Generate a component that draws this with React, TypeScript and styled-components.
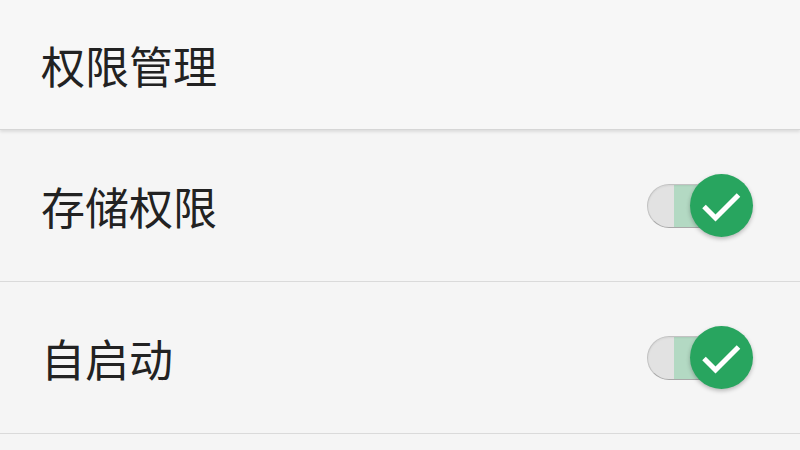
import React from "react";
import styled, { createGlobalStyle } from "styled-components";

const Global = createGlobalStyle`
  html, body { margin: 0; padding: 0; background: #f5f5f5; }
  body { font-family: "Noto Sans CJK SC", "Noto Sans", sans-serif; color: #222; }
`;

const Page = styled.div`
  width: 800px;
  height: 450px;
  overflow: hidden;
  background: #f5f5f5;
  display: flex;
  flex-direction: column;
`;

const Header = styled.header`
  height: 129px;
  flex: none;
  display: flex;
  align-items: center;
  padding-left: 41px;
  background: #f7f7f7;
  border-bottom: 1px solid #d6d6d6;
  box-shadow: 0 2px 3px rgba(0, 0, 0, 0.1);
  position: relative;
  z-index: 1;
`;

const Title = styled.h1`
  margin: 0;
  font-size: 44px;
  font-weight: 400;
  line-height: 1;
  color: #222;
`;

const Row = styled.div`
  height: 152px;
  flex: none;
  display: flex;
  align-items: center;
  justify-content: space-between;
  padding: 0 47px 0 41px;
  border-bottom: 1px solid #dadada;
  box-sizing: border-box;
`;

const Label = styled.span`
  font-size: 44px;
  font-weight: 400;
  line-height: 1;
  color: #222;
`;

const Toggle = styled.div`
  position: relative;
  width: 106px;
  height: 63px;
  flex: none;
`;

const Track = styled.div`
  position: absolute;
  left: 0;
  top: 10px;
  width: 90px;
  height: 44px;
  border-radius: 22px;
  box-sizing: border-box;
  background: linear-gradient(to right, #e2e2e2 0 26px, #b3d9c3 26px 100%);
  border: 1.5px solid #c2c2c2;
  border-bottom-color: #a8a8a8;
  box-shadow: inset 0 1px 2px rgba(0, 0, 0, 0.06);
`;

const Knob = styled.div`
  position: absolute;
  right: 0;
  top: 0;
  width: 63px;
  height: 63px;
  border-radius: 50%;
  background: #28a55f;
  box-shadow: 0 2px 4px rgba(0, 0, 0, 0.25);
`;

const CheckSvg = styled.svg`
  display: block;
`;

const Check = () => (
  <CheckSvg width="63" height="63" viewBox="0 0 63 63">
    <path d="M14 32.5 L25.5 44 L48.5 21" fill="none" stroke="#fff" strokeWidth="5" strokeLinecap="butt" strokeLinejoin="miter" />
  </CheckSvg>
);

const Switch = () => (
  <Toggle>
    <Track />
    <Knob>
      <Check />
    </Knob>
  </Toggle>
);

export default function App() {
  return (
    <>
      <Global />
      <Page>
        <Header>
          <Title>权限管理</Title>
        </Header>
        <Row>
          <Label>存储权限</Label>
          <Switch />
        </Row>
        <Row>
          <Label>自启动</Label>
          <Switch />
        </Row>
      </Page>
    </>
  );
}
